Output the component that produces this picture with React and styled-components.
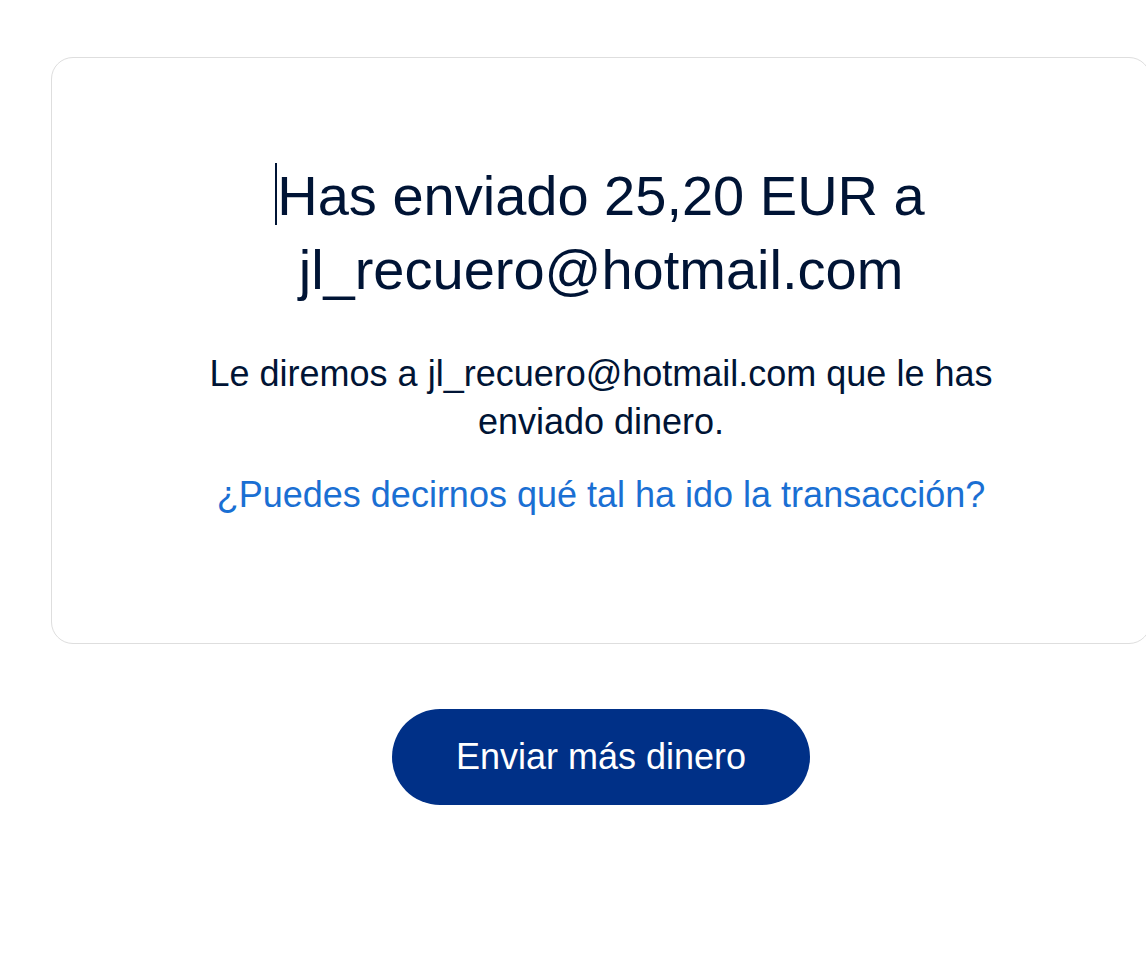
import React from 'react'
import styled, { createGlobalStyle } from 'styled-components'

const GlobalStyle = createGlobalStyle`
  html, body {
    margin: 0;
    padding: 0;
    background: #ffffff;
    overflow: hidden;
  }
  body {
    font-family: "Liberation Sans", Arial, sans-serif;
  }
`

const Page = styled.main`
  display: flex;
  flex-direction: column;
  align-items: flex-start;
  padding: 57px 0 0 51px;
  width: 1146px;
  box-sizing: border-box;
`

const Card = styled.section`
  width: 1100px;
  flex-shrink: 0;
  box-sizing: border-box;
  border: 1.5px solid #dedede;
  border-radius: 22px;
  background: #ffffff;
  padding: 101px 150px 124px;
  display: flex;
  flex-direction: column;
  align-items: center;
  text-align: center;
`

const Heading = styled.h1`
  margin: 0;
  font-size: 56px;
  line-height: 74px;
  font-weight: 400;
  color: #001435;
  position: relative;
`

const Caret = styled.span`
  position: absolute;
  left: -2px;
  top: 4px;
  width: 1.5px;
  height: 62px;
  background: #001435;
`

const Message = styled.p`
  margin: 43px 0 0;
  font-size: 36px;
  line-height: 48px;
  color: #001435;
  max-width: 800px;
`

const FeedbackLink = styled.a`
  margin-top: 25px;
  font-size: 36px;
  line-height: 48px;
  color: #1a6fd3;
  text-decoration: none;
  cursor: pointer;
`

const Actions = styled.div`
  width: 1100px;
  display: flex;
  justify-content: center;
  margin-top: 65px;
`

const PrimaryButton = styled.button`
  height: 96px;
  padding: 0 64px;
  border: none;
  border-radius: 48px;
  background: #003087;
  color: #ffffff;
  font-family: "Liberation Sans", Arial, sans-serif;
  font-size: 36px;
  cursor: pointer;
`

export default function App() {
  return (
    <>
      <GlobalStyle />
      <Page>
        <Card>
          <Heading>
            <Caret />
            Has enviado 25,20 EUR a<br />jl_recuero@hotmail.com
          </Heading>
          <Message>
            Le diremos a jl_recuero@hotmail.com que le has enviado dinero.
          </Message>
          <FeedbackLink>¿Puedes decirnos qué tal ha ido la transacción?</FeedbackLink>
        </Card>
        <Actions>
          <PrimaryButton>Enviar más dinero</PrimaryButton>
        </Actions>
      </Page>
    </>
  )
}
